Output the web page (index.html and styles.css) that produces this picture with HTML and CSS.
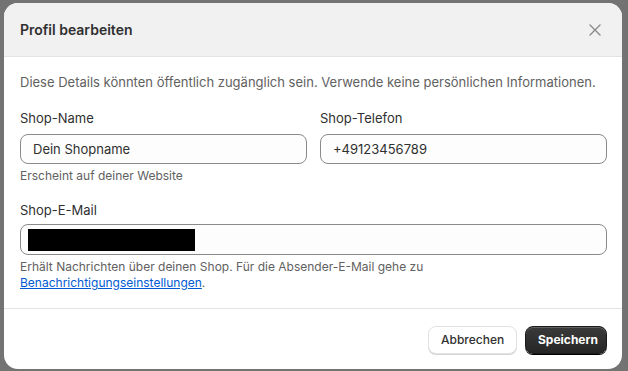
FILE: index.html
```html
<!DOCTYPE html>
<html lang="de">
<head>
<meta charset="utf-8">
<title>Profil bearbeiten</title>
<link rel="stylesheet" href="styles.css">
</head>
<body>
<div class="backdrop">
  <div class="modal">
    <div class="modal-header">
      <h2 class="modal-title">Profil bearbeiten</h2>
      <button class="close-btn" aria-label="Schließen">
        <svg width="12" height="12" viewBox="0 0 12 12"><path d="M1 1L11 11M11 1L1 11" stroke="#8a8a8a" stroke-width="1.4" stroke-linecap="round"/></svg>
      </button>
    </div>
    <div class="modal-body">
      <p class="intro">Diese Details könnten öffentlich zugänglich sein. Verwende keine persönlichen Informationen.</p>
      <div class="row">
        <div class="field">
          <label class="label">Shop-Name</label>
          <div class="input"><span>Dein Shopname</span></div>
          <p class="help">Erscheint auf deiner Website</p>
        </div>
        <div class="field">
          <label class="label">Shop-Telefon</label>
          <div class="input"><span>+49123456789</span></div>
        </div>
      </div>
      <div class="field field-mail">
        <label class="label">Shop-E-Mail</label>
        <div class="input input-mail"><span class="redacted"></span></div>
        <p class="help">Erhält Nachrichten über deinen Shop. Für die Absender-E-Mail gehe zu<br><a href="#" class="link">Benachrichtigungseinstellungen</a>.</p>
      </div>
    </div>
    <div class="modal-footer">
      <button class="btn btn-secondary">Abbrechen</button>
      <button class="btn btn-primary">Speichern</button>
    </div>
  </div>
</div>
</body>
</html>
```

FILE: styles.css
```css
* { box-sizing: border-box; }
html, body { margin: 0; padding: 0; }
body {
  background: #737373;
  font-family: Inter, "Noto Sans", sans-serif;
  color: #303030;
  width: 628px;
  height: 371px;
  overflow: hidden;
}
.backdrop {
  padding: 3px 0 0 4px;
}
.modal {
  width: 618px;
  height: 366px;
  background: #ffffff;
  border-radius: 14px;
  overflow: hidden;
  display: flex;
  flex-direction: column;
}
.modal-header {
  height: 54px;
  background: #f1f1f1;
  border-bottom: 1px solid #e3e3e3;
  display: flex;
  align-items: center;
  justify-content: space-between;
  padding: 0 19px 0 16px;
}
.modal-title {
  margin: 0;
  font-size: 14px;
  font-weight: 600;
  color: #303030;
}
.close-btn {
  border: 0;
  background: transparent;
  padding: 0;
  width: 16px;
  height: 16px;
  display: flex;
  align-items: center;
  justify-content: center;
}
.modal-body {
  padding: 15px 15px 17px 16px;
  font-size: 13px;
  line-height: 20px;
  border-bottom: 1px solid #e3e3e3;
}
.intro {
  margin: 0 0 16px;
  color: #616161;
}
.row {
  display: grid;
  grid-template-columns: 1fr 1fr;
  gap: 13px;
}
.field { display: flex; flex-direction: column; }
.field-mail { margin-top: 16px; }
.label {
  color: #303030;
  margin-bottom: 6px;
}
.field-mail .label { margin-bottom: 4px; }
.input {
  height: 30px;
  border: 1px solid #8a8a8a;
  border-radius: 8px;
  background: #fdfdfd;
  display: flex;
  align-items: center;
  padding: 0 12px;
  color: #303030;
}
.input-mail { padding-left: 7px; height: 31px; }
.redacted {
  display: block;
  width: 167px;
  height: 22px;
  background: #000;
}
.help {
  margin: 4px 0 0;
  color: #616161;
  font-size: 12px;
  line-height: 16px;
}
.link {
  color: #005bd3;
  text-decoration: underline;
}
.modal-footer {
  flex: 1;
  display: flex;
  justify-content: flex-end;
  align-items: center;
  gap: 8px;
  padding: 1px 15px 0 16px;
}
.btn {
  font-family: Inter, "Noto Sans", sans-serif;
  font-size: 12px;
  font-weight: 600;
  height: 28px;
  border-radius: 8px;
  padding: 0 12px;
  cursor: pointer;
}
.btn-secondary {
  background: #ffffff;
  color: #303030;
  border: 1px solid #e3e3e3;
  box-shadow: 0 1px 0 #d4d4d4;
  width: 89px;
  font-weight: 500;
}
.btn-primary {
  background: linear-gradient(#3a3a3a, #262626);
  color: #ffffff;
  border: 1px solid #1a1a1a;
  box-shadow: 0 1px 0 #000, inset 0 1px 0 rgba(255,255,255,0.2);
  width: 82px;
  font-weight: 650;
}
```
